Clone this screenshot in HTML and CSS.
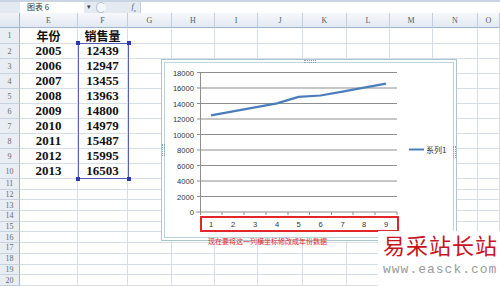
FILE: index.html
```html
<!DOCTYPE html>
<html>
<head>
<meta charset="utf-8">
<link rel="stylesheet" href="styles.css">
</head>
<body>
<div class="fbar">
  <div class="namebox">图表 6</div>
  <div class="dd">▾</div>
  <div class="fxzone"><span class="paren"></span><span class="fx">f<sub>x</sub></span></div>
  <div class="formula"></div>
</div>
<div class="sheet">
  <div class="corner"></div><div class="ch">E</div><div class="ch">F</div><div class="ch">G</div><div class="ch">H</div><div class="ch">I</div><div class="ch">J</div><div class="ch">K</div><div class="ch">L</div><div class="ch">M</div><div class="ch">N</div><div class="ch">O</div>
  <div class="rh">1</div><div class="c hd">年份</div><div class="c hd">销售量</div><div class="c"></div><div class="c"></div><div class="c"></div><div class="c"></div><div class="c"></div><div class="c"></div><div class="c"></div><div class="c"></div><div class="c"></div>
  <div class="rh">2</div><div class="c n">2005</div><div class="c n">12439</div><div class="c"></div><div class="c"></div><div class="c"></div><div class="c"></div><div class="c"></div><div class="c"></div><div class="c"></div><div class="c"></div><div class="c"></div>
  <div class="rh">3</div><div class="c n">2006</div><div class="c n">12947</div><div class="c"></div><div class="c"></div><div class="c"></div><div class="c"></div><div class="c"></div><div class="c"></div><div class="c"></div><div class="c"></div><div class="c"></div>
  <div class="rh">4</div><div class="c n">2007</div><div class="c n">13455</div><div class="c"></div><div class="c"></div><div class="c"></div><div class="c"></div><div class="c"></div><div class="c"></div><div class="c"></div><div class="c"></div><div class="c"></div>
  <div class="rh">5</div><div class="c n">2008</div><div class="c n">13963</div><div class="c"></div><div class="c"></div><div class="c"></div><div class="c"></div><div class="c"></div><div class="c"></div><div class="c"></div><div class="c"></div><div class="c"></div>
  <div class="rh">6</div><div class="c n">2009</div><div class="c n">14800</div><div class="c"></div><div class="c"></div><div class="c"></div><div class="c"></div><div class="c"></div><div class="c"></div><div class="c"></div><div class="c"></div><div class="c"></div>
  <div class="rh">7</div><div class="c n">2010</div><div class="c n">14979</div><div class="c"></div><div class="c"></div><div class="c"></div><div class="c"></div><div class="c"></div><div class="c"></div><div class="c"></div><div class="c"></div><div class="c"></div>
  <div class="rh">8</div><div class="c n">2011</div><div class="c n">15487</div><div class="c"></div><div class="c"></div><div class="c"></div><div class="c"></div><div class="c"></div><div class="c"></div><div class="c"></div><div class="c"></div><div class="c"></div>
  <div class="rh">9</div><div class="c n">2012</div><div class="c n">15995</div><div class="c"></div><div class="c"></div><div class="c"></div><div class="c"></div><div class="c"></div><div class="c"></div><div class="c"></div><div class="c"></div><div class="c"></div>
  <div class="rh">10</div><div class="c n">2013</div><div class="c n">16503</div><div class="c"></div><div class="c"></div><div class="c"></div><div class="c"></div><div class="c"></div><div class="c"></div><div class="c"></div><div class="c"></div><div class="c"></div>
  <div class="rh">11</div><div class="c"></div><div class="c"></div><div class="c"></div><div class="c"></div><div class="c"></div><div class="c"></div><div class="c"></div><div class="c"></div><div class="c"></div><div class="c"></div><div class="c"></div>
  <div class="rh">12</div><div class="c"></div><div class="c"></div><div class="c"></div><div class="c"></div><div class="c"></div><div class="c"></div><div class="c"></div><div class="c"></div><div class="c"></div><div class="c"></div><div class="c"></div>
  <div class="rh">13</div><div class="c"></div><div class="c"></div><div class="c"></div><div class="c"></div><div class="c"></div><div class="c"></div><div class="c"></div><div class="c"></div><div class="c"></div><div class="c"></div><div class="c"></div>
  <div class="rh">14</div><div class="c"></div><div class="c"></div><div class="c"></div><div class="c"></div><div class="c"></div><div class="c"></div><div class="c"></div><div class="c"></div><div class="c"></div><div class="c"></div><div class="c"></div>
  <div class="rh">15</div><div class="c"></div><div class="c"></div><div class="c"></div><div class="c"></div><div class="c"></div><div class="c"></div><div class="c"></div><div class="c"></div><div class="c"></div><div class="c"></div><div class="c"></div>
  <div class="rh">16</div><div class="c"></div><div class="c"></div><div class="c"></div><div class="c"></div><div class="c"></div><div class="c"></div><div class="c"></div><div class="c"></div><div class="c"></div><div class="c"></div><div class="c"></div>
  <div class="rh">17</div><div class="c"></div><div class="c"></div><div class="c"></div><div class="c"></div><div class="c"></div><div class="c"></div><div class="c"></div><div class="c"></div><div class="c"></div><div class="c"></div><div class="c"></div>
  <div class="rh">18</div><div class="c"></div><div class="c"></div><div class="c"></div><div class="c"></div><div class="c"></div><div class="c"></div><div class="c"></div><div class="c"></div><div class="c"></div><div class="c"></div><div class="c"></div>
  <div class="rh">19</div><div class="c"></div><div class="c"></div><div class="c"></div><div class="c"></div><div class="c"></div><div class="c"></div><div class="c"></div><div class="c"></div><div class="c"></div><div class="c"></div><div class="c"></div>
  <div class="rh">20</div><div class="c"></div><div class="c"></div><div class="c"></div><div class="c"></div><div class="c"></div><div class="c"></div><div class="c"></div><div class="c"></div><div class="c"></div><div class="c"></div><div class="c"></div>
</div>

<div class="selection">
  <span class="hdl tl"></span><span class="hdl tr"></span><span class="hdl bl"></span><span class="hdl br"></span>
</div>

<div class="chart">
  <span class="grip gt"></span><span class="grip gl"></span><span class="grip gr"></span>
  <svg class="plot" width="296" height="182" viewBox="161 59 296 182">
    <g stroke="#8e8e8e" stroke-width="1">
      <line x1="200" y1="72.5" x2="397" y2="72.5"/>
      <line x1="200" y1="88" x2="397" y2="88"/>
      <line x1="200" y1="103.5" x2="397" y2="103.5"/>
      <line x1="200" y1="119" x2="397" y2="119"/>
      <line x1="200" y1="134.5" x2="397" y2="134.5"/>
      <line x1="200" y1="150" x2="397" y2="150"/>
      <line x1="200" y1="165.5" x2="397" y2="165.5"/>
      <line x1="200" y1="181" x2="397" y2="181"/>
      <line x1="200" y1="196.5" x2="397" y2="196.5"/>
      <line x1="196" y1="212" x2="397" y2="212"/>
      <line x1="200.5" y1="72" x2="200.5" y2="212"/>
      <line x1="197" y1="72.5" x2="200" y2="72.5"/>
      <line x1="197" y1="88" x2="200" y2="88"/>
      <line x1="197" y1="103.5" x2="200" y2="103.5"/>
      <line x1="197" y1="119" x2="200" y2="119"/>
      <line x1="197" y1="134.5" x2="200" y2="134.5"/>
      <line x1="197" y1="150" x2="200" y2="150"/>
      <line x1="197" y1="165.5" x2="200" y2="165.5"/>
      <line x1="197" y1="181" x2="200" y2="181"/>
      <line x1="197" y1="196.5" x2="200" y2="196.5"/>
      <line x1="200.5" y1="212" x2="200.5" y2="215"/>
      <line x1="222" y1="212" x2="222" y2="215"/>
      <line x1="244" y1="212" x2="244" y2="215"/>
      <line x1="266" y1="212" x2="266" y2="215"/>
      <line x1="288" y1="212" x2="288" y2="215"/>
      <line x1="309.5" y1="212" x2="309.5" y2="215"/>
      <line x1="331.5" y1="212" x2="331.5" y2="215"/>
      <line x1="353" y1="212" x2="353" y2="215"/>
      <line x1="375" y1="212" x2="375" y2="215"/>
      <line x1="397" y1="212" x2="397" y2="215"/>
    </g>
    <g class="ylab" text-anchor="end">
      <text x="194" y="75.5">18000</text>
      <text x="194" y="91">16000</text>
      <text x="194" y="106.5">14000</text>
      <text x="194" y="122">12000</text>
      <text x="194" y="137.5">10000</text>
      <text x="194" y="153">8000</text>
      <text x="194" y="168.5">6000</text>
      <text x="194" y="184">4000</text>
      <text x="194" y="199.5">2000</text>
      <text x="194" y="215">0</text>
    </g>
    <g class="xlab" text-anchor="middle">
      <text x="211" y="227">1</text>
      <text x="233" y="227">2</text>
      <text x="255" y="227">3</text>
      <text x="277" y="227">4</text>
      <text x="298.5" y="227">5</text>
      <text x="320.5" y="227">6</text>
      <text x="342.5" y="227">7</text>
      <text x="364" y="227">8</text>
      <text x="386" y="227">9</text>
    </g>
    <polyline fill="none" stroke="#4a7ebb" stroke-width="2.2" stroke-linejoin="round" points="211,115.3 233,111.3 255,107.4 277,103.4 298.5,96.9 320.5,95.5 342.5,91.6 364,87.6 386,83.6"/>
    <line x1="409" y1="149.5" x2="424" y2="149.5" stroke="#4a7ebb" stroke-width="2"/>
    <text class="leg" x="426" y="152.5">系列1</text>
  </svg>
</div>

<div class="mark"></div>
<div class="note">现在要将这一列横坐标修改成年份数据</div>

<div class="wm">
  <div class="wm-cn">易采站长站</div>
  <div class="wm-en">www.easck.com</div>
</div>
</body>
</html>
```

FILE: styles.css
```css
html, body {
  margin: 0;
  padding: 0;
}
body {
  width: 500px;
  height: 286px;
  overflow: hidden;
  position: relative;
  background: #fff;
  font-family: "Liberation Sans", "Noto Sans CJK SC", sans-serif;
}

/* formula bar */
.fbar {
  height: 13px;
  box-sizing: border-box;
  display: flex;
  background: #e4eaf2;
  border-top: 2px solid #c9d5e3;
}
.namebox {
  margin-left: 20px;
  width: 64px;
  box-sizing: border-box;
  background: #fff;
  padding-left: 7px;
  font-size: 8px;
  line-height: 10px;
  color: #333;
  font-family: "Noto Sans CJK SC", sans-serif;
}
.dd {
  width: 10px;
  font-size: 7px;
  line-height: 10px;
  color: #444;
  text-align: center;
}
.fxzone {
  width: 46px;
  display: flex;
  align-items: center;
  justify-content: space-between;
  padding: 0 4px 0 2px;
  box-sizing: border-box;
}
.paren {
  width: 8px;
  height: 9px;
  border-radius: 50%;
  border: 1px solid #b7c3d1;
  border-right-color: transparent;
  background: #f4f7fa;
}
.fx {
  font-family: "Liberation Serif", serif;
  font-style: italic;
  font-size: 8px;
  color: #555;
}
.fx sub { font-size: 5px; }
.formula {
  flex: 1;
  background: #fff;
  border-left: 1px solid #c5d1de;
}

/* sheet */
.sheet {
  display: grid;
  grid-template-columns: 20px 58px 50px 44px 43px 43px 45px 44px 43px 43px 45px 22px;
  grid-template-rows: 15px 16px repeat(9, 15px) repeat(10, 10.7px);
}
.corner {
  background: linear-gradient(#f0f3f8, #dde5ef);
  border-right: 1px solid #9eb6ce;
  border-bottom: 1px solid #9eb6ce;
  box-sizing: border-box;
}
.ch {
  background: linear-gradient(#f6f8fb, #e2e9f2);
  border-right: 1px solid #c2cedc;
  border-bottom: 1px solid #9eb6ce;
  box-sizing: border-box;
  font-family: "Liberation Serif", serif;
  font-size: 8px;
  color: #5a5a5a;
  display: flex;
  align-items: center;
  justify-content: center;
}
.rh {
  background: #e9eef5;
  border-right: 1px solid #9eb6ce;
  border-bottom: 1px solid #c6d2e0;
  box-sizing: border-box;
  font-family: "Liberation Serif", serif;
  font-size: 8px;
  color: #6a6a6a;
  display: flex;
  align-items: center;
  justify-content: center;
}
.c {
  border-right: 1px solid #d8dee8;
  border-bottom: 1px solid #d8dee8;
  box-sizing: border-box;
  display: flex;
  align-items: center;
  justify-content: center;
  color: #111;
}
.hd {
  font-family: "Noto Sans CJK SC", sans-serif;
  font-weight: bold;
  font-size: 12px;
}
.n {
  font-family: "Liberation Serif", serif;
  font-weight: bold;
  font-size: 13px;
}

/* selection of F2:F10 */
.selection {
  position: absolute;
  left: 78px;
  top: 43px;
  width: 51px;
  height: 136px;
  box-sizing: border-box;
  border: 1px solid #5561b5;
}
.hdl {
  position: absolute;
  width: 4px;
  height: 4px;
  background: #2a3aa8;
}
.tl { left: -3px; top: -3px; }
.tr { right: -3px; top: -3px; }
.bl { left: -3px; bottom: -3px; }
.br { right: -3px; bottom: -3px; }

/* chart */
.chart {
  position: absolute;
  left: 161px;
  top: 59px;
  width: 296px;
  height: 182px;
  box-sizing: border-box;
  background: #fff;
  border: 1px solid #aac6cf;
  box-shadow: inset 0 0 0 2px #fff, inset 0 0 0 3px #bcd5dc;
}
.plot {
  position: absolute;
  left: -1px;
  top: -1px;
}
.ylab text, .xlab text {
  font-family: "Liberation Sans", sans-serif;
  font-size: 7.6px;
  fill: #333;
}
.leg {
  font-family: "Noto Sans CJK SC", sans-serif;
  font-size: 8px;
  fill: #333;
}
.grip {
  position: absolute;
  border: 1px dotted #8aa6b0;
}
.gt { left: 142px; top: 0px; width: 10px; height: 1px; }
.gl { left: 0px; top: 84px; width: 1px; height: 10px; }
.gr { right: 0px; top: 86px; width: 1px; height: 10px; }

/* annotation */
.mark {
  position: absolute;
  left: 200px;
  top: 216px;
  width: 199px;
  height: 16px;
  box-sizing: border-box;
  border: 2px solid #e3262b;
}
.note {
  position: absolute;
  left: 208px;
  top: 237px;
  font-family: "Noto Sans CJK SC", sans-serif;
  font-size: 7px;
  line-height: 9px;
  color: #e0282c;
  white-space: nowrap;
}

/* watermark */
.wm {
  position: absolute;
  left: 378px;
  top: 231px;
  width: 122px;
  height: 55px;
  background: #fff;
  padding-left: 5px;
  box-sizing: border-box;
}
.wm-cn {
  font-family: "Noto Sans CJK SC", sans-serif;
  font-size: 22px;
  line-height: 26px;
  letter-spacing: 1px;
  color: #c8141f;
  white-space: nowrap;
}
.wm-en {
  font-family: "Liberation Mono", monospace;
  font-size: 13px;
  line-height: 16px;
  margin-top: 5px;
  letter-spacing: 1px;
  color: #9a9a9a;
  white-space: nowrap;
}
```
